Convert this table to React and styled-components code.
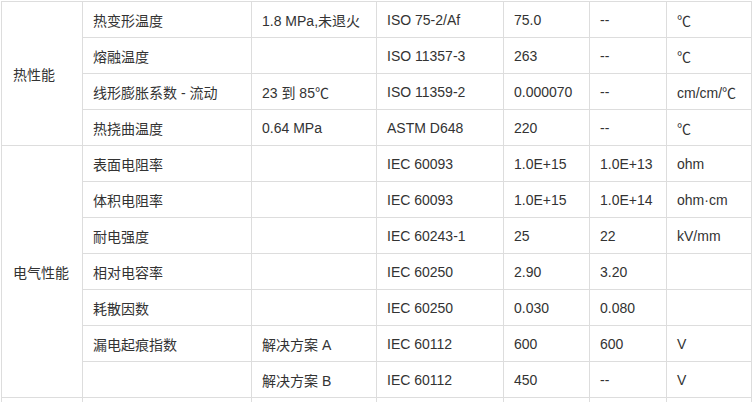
import React from "react";
import styled, { createGlobalStyle } from "styled-components";

const GlobalStyle = createGlobalStyle`
	body {
		margin: 0;
		background: #fff;
	}
`;

const Page = styled.div`
	padding: 1px 0 0 1px;
`;

const Table = styled.table`
	border-collapse: collapse;
	table-layout: fixed;
	width: 750px;
	font-family: "Liberation Sans", "Noto Sans CJK SC", sans-serif;
	font-size: 14px;
	color: #333;
`;

const Cell = styled.td`
	border: 1px solid #ddd;
	height: 36px;
	padding: 0 10px;
	vertical-align: middle;
	white-space: nowrap;
	box-sizing: border-box;
`;

const GroupCell = styled(Cell)`
	padding-left: 11px;
`;

const widths = [81, 169, 125, 127, 86, 77, 85];

const groups = [
	{
		name: "热性能",
		rows: [
			["热变形温度", "1.8 MPa,未退火", "ISO 75-2/Af", "75.0", "--", "℃"],
			["熔融温度", "", "ISO 11357-3", "263", "--", "℃"],
			["线形膨胀系数 - 流动", "23 到 85℃", "ISO 11359-2", "0.000070", "--", "cm/cm/℃"],
			["热挠曲温度", "0.64 MPa", "ASTM D648", "220", "--", "℃"],
		],
	},
	{
		name: "电气性能",
		rows: [
			["表面电阻率", "", "IEC 60093", "1.0E+15", "1.0E+13", "ohm"],
			["体积电阻率", "", "IEC 60093", "1.0E+15", "1.0E+14", "ohm·cm"],
			["耐电强度", "", "IEC 60243-1", "25", "22", "kV/mm"],
			["相对电容率", "", "IEC 60250", "2.90", "3.20", ""],
			["耗散因数", "", "IEC 60250", "0.030", "0.080", ""],
			["漏电起痕指数", "解决方案 A", "IEC 60112", "600", "600", "V"],
			["", "解决方案 B", "IEC 60112", "450", "--", "V"],
		],
	},
	{
		name: "",
		rows: [["", "", "", "", "", ""]],
	},
];

const App = () => (
	<Page>
		<GlobalStyle />
		<Table>
			<colgroup>
				{widths.map((w, i) => (
					<col key={i} style={{ width: w }} />
				))}
			</colgroup>
			<tbody>
				{groups.map((g) =>
					g.rows.map((row, r) => (
						<tr key={g.name + r}>
							{r === 0 && (
								<GroupCell rowSpan={g.rows.length}>{g.name}</GroupCell>
							)}
							{row.map((text, c) => (
								<Cell key={c}>{text}</Cell>
							))}
						</tr>
					))
				)}
			</tbody>
		</Table>
	</Page>
);

export default App;
